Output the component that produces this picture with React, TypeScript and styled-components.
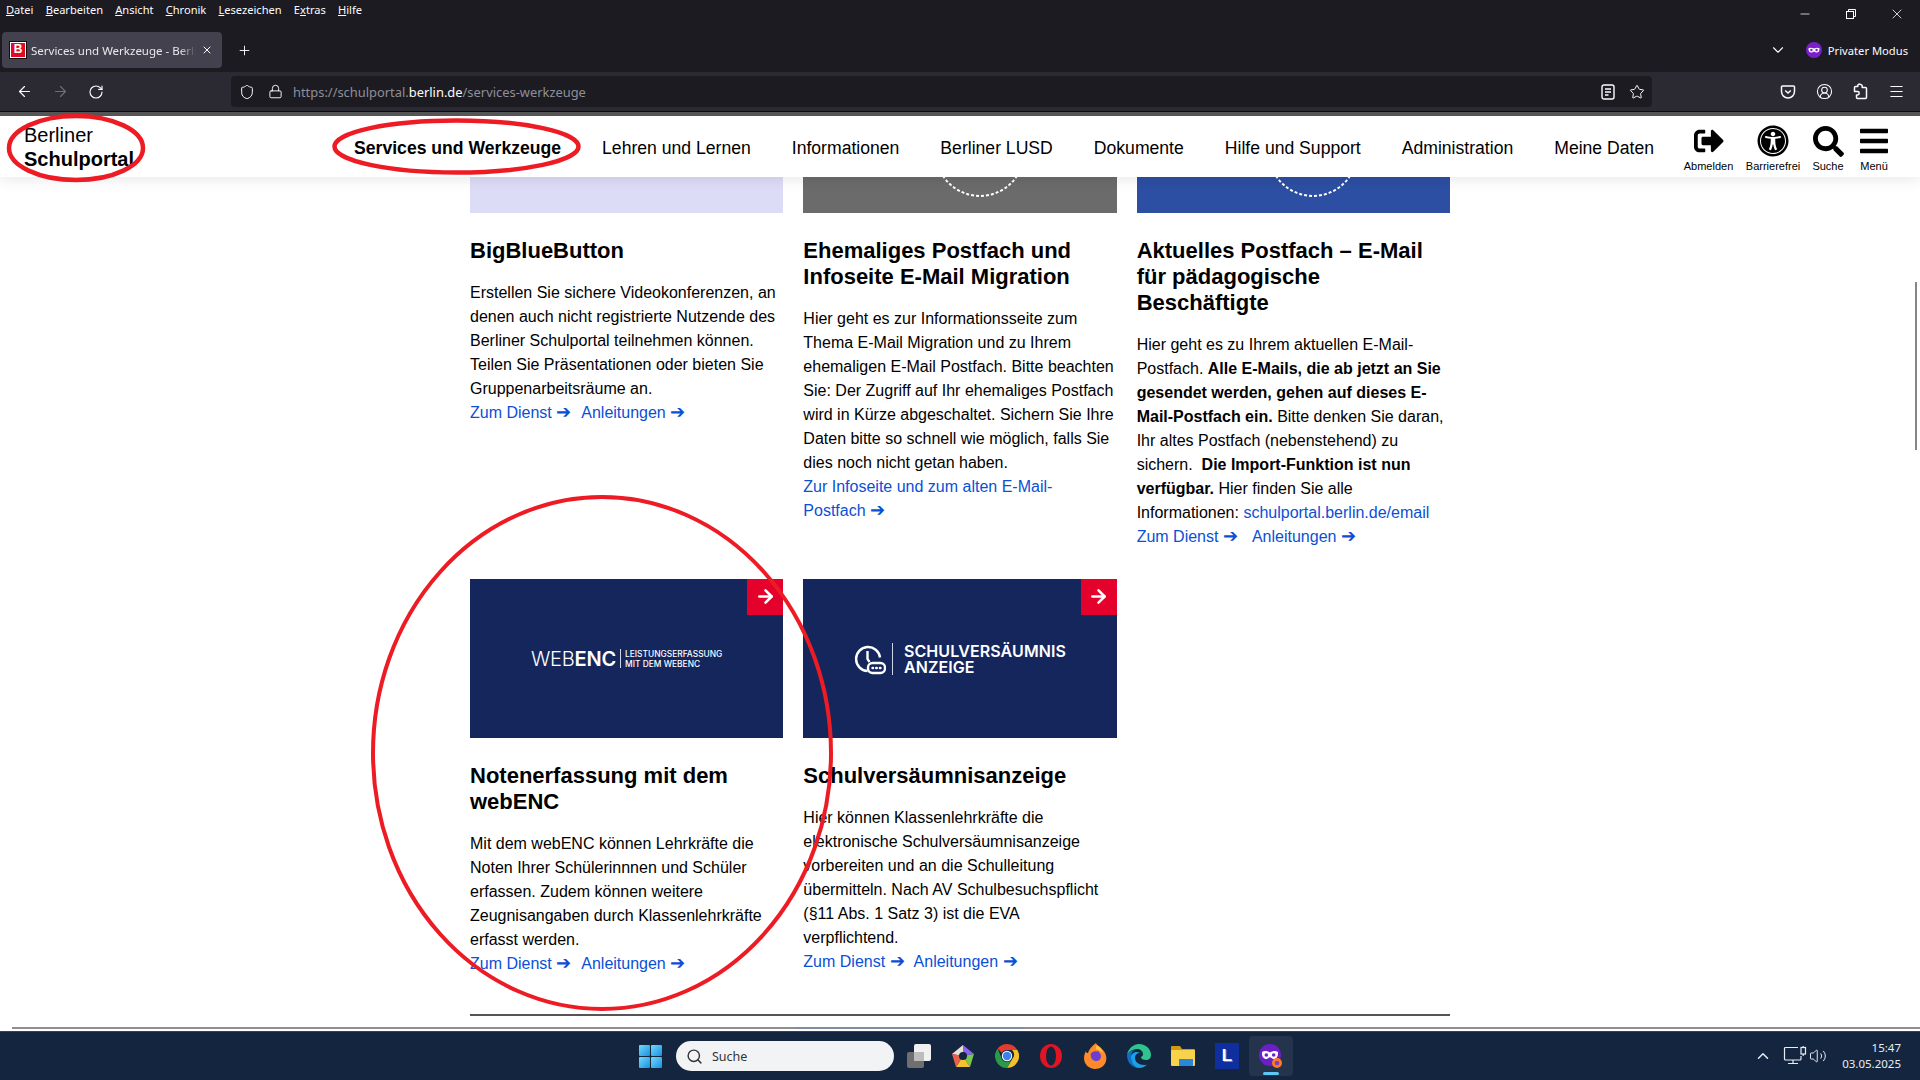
import React from 'react';
import styled, { createGlobalStyle } from 'styled-components';
import {
  ArrowLeft, ArrowRight, RotateCw, Shield, Lock, Star, Menu, ChevronDown, Plus, X, Minus, Search,
  ChevronUp, Volume2, CircleUserRound,
} from 'lucide-react';
import { FaSignOutAlt, FaUniversalAccess, FaSearch, FaBars } from 'react-icons/fa';

const Global = createGlobalStyle`
  html, body { margin: 0; padding: 0; height: 100%; overflow: hidden; background: #fff; }
  * { box-sizing: border-box; }
  #root { height: 1080px; }
`;

const UI = `"Noto Sans", "Open Sans", sans-serif`;
const WEB = `"Liberation Sans", Arial, sans-serif`;

const Frame = styled.div`
  position: relative;
  width: 1920px;
  height: 1080px;
  display: flex;
  flex-direction: column;
  overflow: hidden;
`;

const TopChrome = styled.div`
  background: #1c1b22;
  color: #fbfbfe;
  font-family: ${UI};
`;
const TitleRow = styled.div`
  height: 32px;
  display: flex;
  justify-content: space-between;
`;
const MenuBar = styled.div`
  display: flex;
  padding: 2px 0 0 6px;
  gap: 12.2px;
  font-size: 11.1px;
  line-height: 16px;
`;
const MenuEntry = styled.span``;
const Hotkey = styled.span`
  text-decoration: underline;
`;
const WindowButtons = styled.div`
  display: flex;
  height: 28px;
  align-items: center;
`;
const WindowButton = styled.div`
  width: 46px;
  display: flex;
  justify-content: center;
  color: #fff;
`;
const TabRow = styled.div`
  height: 40px;
  display: flex;
  padding: 0 0 4px 2px;
  align-items: stretch;
`;
const Tab = styled.div`
  width: 220px;
  background: #42414d;
  border-radius: 4px;
  display: flex;
  align-items: center;
  padding: 0 9px 0 8px;
  font-size: 11.5px;
  gap: 5px;
`;
const Favicon = styled.span`
  width: 16px;
  height: 16px;
  flex: none;
  background: #e30b24;
  border: 1.5px solid #fff;
  outline: 1px solid #111;
  color: #fff;
  font: bold 12px/13px ${WEB};
  text-align: center;
`;
const TabTitle = styled.span`
  flex: 1;
  white-space: nowrap;
  overflow: hidden;
  color: #e8e8ee;
  -webkit-mask-image: linear-gradient(90deg, #000 90%, transparent);
  mask-image: linear-gradient(90deg, #000 90%, transparent);
`;
const NewTab = styled.div`
  width: 44px;
  display: flex;
  align-items: center;
  justify-content: center;
`;
const Spacer = styled.div`
  flex: 1;
`;
const PrivateMode = styled.div`
  display: flex;
  align-items: center;
  font-size: 11.2px;
  gap: 6px;
  padding-right: 12px;
  margin-left: 19px;
  white-space: nowrap;
`;
const Chevron = styled.div`
  display: flex;
  align-items: center;
`;

const Toolbar = styled.div`
  height: 44px;
  background: #2b2a33;
  border-bottom: 4px solid #555;
  padding: 4px 6px 5px;
  display: flex;
  color: #fbfbfe;
  position: relative;
  &::after { content: ''; position: absolute; left: 0; right: 0; bottom: 0; height: 1px; background: #0c0c0f; }
`;
const ToolIcon = styled.div<{ $dim?: boolean }>`
  width: 36px;
  display: flex;
  align-items: center;
  justify-content: center;
  color: ${p => (p.$dim ? '#6f6e76' : '#fbfbfe')};
`;
const UrlBar = styled.div`
  margin-left: 117px;
  width: 1421px;
  height: 31px;
  background: #1c1b22;
  border-radius: 4px;
  display: flex;
  align-items: center;
  font-family: ${UI};
  font-size: 12.9px;
`;
const UrlIcon = styled.div<{ $w: number }>`
  width: ${p => p.$w}px;
  display: flex;
  align-items: center;
  justify-content: center;
  flex: none;
`;
const UrlText = styled.div`
  color: #8f8f96;
  margin-left: 6px;
  flex: 1;
  b { color: #fbfbfe; font-weight: 400; }
`;
const ToolRight = styled.div`
  display: flex;
  margin-left: auto;
`;

const Page = styled.main`
  flex: 1;
  min-height: 0;
  display: flex;
  flex-direction: column;
  background: #fff;
  font-family: ${WEB};
  color: #000;
  overflow: hidden;
`;
const Header = styled.header`
  height: 61px;
  flex: none;
  display: flex;
  align-items: center;
  padding: 0 32px 0 24px;
  background: #fff;
  box-shadow: 0 4px 12px rgba(0,0,0,.08);
  position: relative;
  z-index: 2;
`;
const Logo = styled.div`
  font-size: 20px;
  line-height: 24px;
  b { display: block; }
`;
const Nav = styled.nav`
  margin-left: auto;
  display: flex;
  gap: 41px;
  font-size: 17.6px;
  margin-top: 3px;
`;
const NavItem = styled.span<{ $active?: boolean }>`
  font-weight: ${p => (p.$active ? 700 : 400)};
  white-space: nowrap;
`;
const Tools = styled.div`
  display: flex;
  margin-left: 13px;
  padding-top: 4px;
`;
const ToolLink = styled.div<{ $w: number }>`
  width: ${p => p.$w}px;
  display: flex;
  flex-direction: column;
  align-items: center;
  font-size: 11px;
  line-height: 14px;
  white-space: nowrap;
  gap: 1px;
`;
const ToolGlyph = styled.div`
  height: 34px;
  display: flex;
  align-items: center;
  justify-content: center;
  color: #000;
`;
const Content = styled.div`
  flex: 1;
  min-height: 0;
  width: 980px;
  margin: 0 auto;
  display: flex;
  flex-direction: column;
`;
const CardGrid = styled.div`
  display: grid;
  grid-template-columns: repeat(3, 1fr);
  column-gap: 20px;
  row-gap: 30px;
  align-items: start;
`;
const Card = styled.article`
  display: flex;
  flex-direction: column;
  font-size: 16px;
  line-height: 24px;
`;
const Banner = styled.div<{ $bg: string; $h: number }>`
  height: ${p => p.$h}px;
  background: ${p => p.$bg};
  position: relative;
  overflow: hidden;
  display: flex;
  align-items: center;
  justify-content: center;
  color: #fff;
  font-family: Inter, sans-serif;
`;
const Corner = styled.div`
  position: absolute;
  top: 0;
  right: 0;
  width: 36px;
  height: 36px;
  background: #e4022c;
  display: flex;
  align-items: center;
  justify-content: center;
  color: #fff;
  padding-bottom: 2px;
`;
const Arc = styled.svg`
  position: absolute;
  left: 50%;
  top: 0;
  margin-left: -40px;
  width: 120px;
  height: 36px;
`;
const Heading = styled.h3`
  margin: 25px 0 17px;
  font-size: 22px;
  line-height: 26px;
  font-weight: 700;
`;
const Body = styled.p`
  margin: 0;
`;
const LinkRow = styled.div<{ $gap: number }>`
  display: flex;
  gap: ${p => p.$gap}px;
`;
const CardLink = styled.a`
  color: #0b4fd6;
  text-decoration: none;
`;
const LinkArrow = styled.span`
  font-size: 18px;
  line-height: 16px;
  white-space: nowrap;
`;
const WebEncMark = styled.div`
  display: flex;
  align-items: center;
  gap: 4px;
`;
const WebEncWord = styled.div`
  font-size: 20px;
  font-weight: 300;
  letter-spacing: -.2px;
  b { font-weight: 600; }
`;
const MarkRule = styled.div<{ $h: number }>`
  width: 1px;
  height: ${p => p.$h}px;
  background: #cfd4e4;
  flex: none;
`;
const WebEncSub = styled.div`
  font-size: 8.4px;
  line-height: 10px;
  font-weight: 500;
  white-space: nowrap;
`;
const SchulMark = styled.div`
  display: flex;
  align-items: center;
  gap: 6px;
`;
const SchulWords = styled.div`
  font-size: 16px;
  line-height: 16px;
  font-weight: 600;
  letter-spacing: .1px;
  white-space: nowrap;
  padding-left: 5px;
`;
const Rule = styled.hr`
  margin: auto 0 0;
  border: 0;
  height: 2px;
  background: #555;
  flex: none;
`;
const PageEnd = styled.div`
  height: 16px;
  flex: none;
  padding: 11px 0 0 12px;
  border-bottom: 1px solid #39434f;
`;
const PageEndLine = styled.div`
  height: 2px;
  background: linear-gradient(90deg, #8f8f8f 0 41%, #7f8ca3 41% 53%, #8f8f8f 53%);
`;
const Annotations = styled.svg`
  position: absolute;
  inset: 0;
  width: 1920px;
  height: 1080px;
  pointer-events: none;
  z-index: 5;
`;
const ScrollThumb = styled.div`
  position: absolute;
  left: 1915px;
  top: 282px;
  width: 2px;
  height: 168px;
  background: #85858a;
  z-index: 3;
`;

const Taskbar = styled.footer`
  height: 48px;
  flex: none;
  background: #14263f;
  display: flex;
  align-items: center;
  padding-left: 628px;
  color: #fff;
  font-family: ${UI};
`;
const TaskCell = styled.div<{ $active?: boolean }>`
  width: 44px;
  height: 40px;
  flex: none;
  display: flex;
  align-items: center;
  justify-content: center;
  position: relative;
  border-radius: 4px;
  background: ${p => (p.$active ? '#24344c' : 'transparent')};
  ${p => p.$active && `
    &::after {
      content: '';
      position: absolute;
      bottom: 1px;
      left: 14px;
      width: 16px;
      height: 3px;
      border-radius: 2px;
      background: #5cc8f5;
    }
  `}
`;
const TaskSearch = styled.div`
  width: 218px;
  height: 30px;
  margin: 0 3px 0 4px;
  background: #f2f3f5;
  border-radius: 15px;
  color: #333;
  display: flex;
  align-items: center;
  padding-left: 10px;
  gap: 9px;
  font-size: 12.5px;
  flex: none;
`;
const Tray = styled.div`
  margin-left: auto;
  display: flex;
  align-items: center;
  padding-right: 19px;
  color: #e8edf3;
`;
const TrayIcon = styled.div<{ $w: number }>`
  width: ${p => p.$w}px;
  display: flex;
  justify-content: center;
`;
const Clock = styled.div`
  font-size: 11.5px;
  line-height: 16px;
  text-align: right;
  margin-left: 12px;
  width: 60px;
`;

const PrivateGlyph = ({ size = 16 }: { size?: number }) => (
  <svg width={size} height={size} viewBox="0 0 16 16">
    <circle cx="8" cy="8" r="8" fill="#7a1fc9" />
    <path d="M2.500 6.200c1.600-.9 3.700-.6 5.500.4 1.800-1 3.900-1.300 5.500-.4.2 2.600-.9 4.400-2.900 4.400-1.200 0-1.900-1.100-2.600-1.100S6.600 10.600 5.400 10.600C3.400 10.600 2.300 8.800 2.500 6.200z" fill="#fff" />
    <circle cx="5.400" cy="8" r="1.200" fill="#7a1fc9" />
    <circle cx="10.600" cy="8" r="1.200" fill="#7a1fc9" />
  </svg>
);

const WinLogo = () => (
  <svg width="23" height="23" viewBox="0 0 23 23">
    <defs>
      <linearGradient id="win" x1="0" y1="0" x2="1" y2="1">
        <stop offset="0" stopColor="#6fdcfb" />
        <stop offset="1" stopColor="#1a8fe0" />
      </linearGradient>
    </defs>
    <rect width="11" height="11" rx="1" fill="url(#win)" />
    <rect x="12" width="11" height="11" rx="1" fill="url(#win)" />
    <rect y="12" width="11" height="11" rx="1" fill="url(#win)" />
    <rect x="12" y="12" width="11" height="11" rx="1" fill="url(#win)" />
  </svg>
);
const TaskView = () => (
  <svg width="24" height="24" viewBox="0 0 24 24">
    <rect x="0" y="8" width="17" height="16" rx="2" fill="#6f6f6f" />
    <rect x="7" y="0" width="17" height="17" rx="2" fill="#f1f1f1" />
    <rect x="7" y="8" width="10" height="9" fill="#bdbdbd" />
  </svg>
);
const Pentagon = () => (
  <svg width="24" height="24" viewBox="0 0 24 24">
    <polygon points="12,1 23,10 12,12" fill="#8a63f0" />
    <polygon points="12,1 1,10 12,12" fill="#e9dfd5" />
    <polygon points="23,10 19,23 12,12" fill="#7bc74d" />
    <polygon points="19,23 5,23 12,12" fill="#f2c230" />
    <polygon points="5,23 1,10 12,12" fill="#e8604c" />
    <circle cx="12" cy="12" r="4" fill="#14263f" />
  </svg>
);
const Chrome = () => (
  <svg width="24" height="24" viewBox="0 0 24 24">
    <path d="M12 0a12 12 0 0 1 10.400 6H12a6 6 0 0 0-5.200 3L2.700 4.500A12 12 0 0 1 12 0z" fill="#e33b2e" />
    <path d="M22.400 6A12 12 0 0 1 12 24l5.200-9a6 6 0 0 0-.2-9z" fill="#f6c02c" />
    <path d="M12 24A12 12 0 0 1 2.700 4.500L6.800 15a6 6 0 0 0 10.400 0z" fill="#2a9a47" />
    <circle cx="12" cy="12" r="5.200" fill="#fff" />
    <circle cx="12" cy="12" r="4.200" fill="#3b82ef" />
  </svg>
);
const Opera = () => (
  <svg width="24" height="24" viewBox="0 0 24 24">
    <ellipse cx="12" cy="12" rx="11" ry="12" fill="#e01422" />
    <ellipse cx="12" cy="12" rx="5" ry="9.500" fill="#14263f" />
  </svg>
);
const Firefox = () => (
  <svg width="24" height="26" viewBox="0 0 24 26">
    <path d="M13 0c1 3 4 3 6 6 4 4 5 8 4 12-1 5-6 8-11 8S1 22 1 15c0-3 1-5 2-7 0 2 1 2 2 2 1-4 4-7 8-10z" fill="#ff8a2a" />
    <path d="M12 8c-1 1-3 1-4 2-1 4 1 8 5 8 3 0 5-2 5-5 0-2-2-4-3-5-1 0-2 1-3 0z" fill="#6b3fd0" />
    <path d="M14 2c2 2 5 4 6 8-2-2-4-3-7-4 0-1 0-3 1-4z" fill="#ffc93c" />
  </svg>
);
const Edge = () => (
  <svg width="24" height="24" viewBox="0 0 24 24">
    <path d="M12 0c7 0 12 5 12 11 0 3-2 5-5 5-3 0-5-1-5-3 1-1 2-1 2-3 0-3-3-5-6-5S2 7 0 11C1 5 6 0 12 0z" fill="#2fc38f" />
    <path d="M0 11c2-4 6-5 8-5-3 1-4 4-4 7 0 5 4 10 10 11C6 25 0 19 0 11z" fill="#0f6fc6" />
    <path d="M4 13c0-3 3-5 6-5 1 0 2 .5 3 1-3 0-5 2-5 5 0 4 4 7 9 7 1 0 2 0 3-.5-2 2-5 3.500-7 3.500C8 24 4 19 4 13z" fill="#1aa0e6" />
  </svg>
);
const Folder = () => (
  <svg width="24" height="24" viewBox="0 0 24 24">
    <path d="M0 3a1 1 0 0 1 1-1h8l2 3h12a1 1 0 0 1 1 1v2H0z" fill="#d19a12" />
    <rect y="6" width="24" height="16" rx="1" fill="#f9d24b" />
    <rect x="8" y="15" width="14" height="7" fill="#2b88d8" />
  </svg>
);
const LTile = styled.div`
  width: 24px;
  height: 26px;
  background: #0f2f9e;
  font: 700 17px/26px ${WEB};
  text-align: center;
  color: #fff;
  text-shadow: 1px 1px 0 #6a7fd8;
`;
const PrivateApp = () => (
  <svg width="24" height="26" viewBox="0 0 24 26">
    <circle cx="11" cy="12" r="11" fill="#6a1fc7" />
    <path d="M3 9c2.500-1.500 5.500-1 8 .5 2.500-1.500 5.500-2 8-.5.3 4-1.300 7-4.300 7-1.700 0-2.700-1.700-3.700-1.700S9 16 7.300 16C4.300 16 2.700 13 3 9z" fill="#fff" />
    <circle cx="7.300" cy="12" r="1.800" fill="#6a1fc7" />
    <circle cx="14.700" cy="12" r="1.800" fill="#6a1fc7" />
    <circle cx="18" cy="20" r="5" fill="#ff7a1a" />
    <circle cx="18" cy="20" r="2.300" fill="#7a3fd0" />
  </svg>
);
const NetworkIcon = () => (
  <svg width="24" height="22" viewBox="0 0 24 22" fill="none" stroke="currentColor" strokeWidth="1.200">
    <path d="M15 2.500H2.500a1 1 0 0 0-1 1V14a1 1 0 0 0 1 1h14.500a1 1 0 0 0 1-1v-3" />
    <path d="M10 15v3M5 18.500h10" />
    <rect x="18" y="2.500" width="4.500" height="6.500" />
    <path d="M20.200 1v1.500M20.200 9v2" />
  </svg>
);
const ClockMark = () => (
  <svg width="32" height="32" viewBox="0 0 32 32" fill="none" stroke="#fff" strokeWidth="2.400">
    <path d="M13.500 28A12 12 0 1 1 26 14.500" />
    <path d="M13.500 8v8l2 3" />
    <rect x="14" y="20" width="17" height="10" rx="4.500" />
    <path d="M18.500 25h.6M22.200 25h.6M25.900 25h.6" strokeLinecap="round" />
  </svg>
);
const ReaderIcon = () => (
  <svg width="14" height="16" viewBox="0 0 14 16" fill="none" stroke="currentColor" strokeWidth="1.400">
    <rect x="1" y="1" width="12" height="14" rx="2" />
    <path d="M4 5h6M4 8h6M4 11h3.500" />
  </svg>
);
const PocketIcon = () => (
  <svg width="16" height="16" viewBox="0 0 16 16" fill="none" stroke="currentColor" strokeWidth="1.500">
    <path d="M2.500 2h11a1 1 0 0 1 1 1v4.500a6.500 6.500 0 0 1-13 0V3a1 1 0 0 1 1-1z" />
    <path d="M5.200 6.500 8 9l2.800-2.500" />
  </svg>
);
const ExtensionIcon = () => (
  <svg width="16" height="17" viewBox="0 0 16 17" fill="none" stroke="currentColor" strokeWidth="1.500" strokeLinejoin="round">
    <path d="M8.500 1.500a1.700 1.700 0 0 1 1.700 1.700v1.300h3.300a1 1 0 0 1 1 1v9a1 1 0 0 1-1 1h-8a1 1 0 0 1-1-1v-2.500h1a1.700 1.700 0 0 0 0-3.400h-3v-4.100a1 1 0 0 1 1-1h2.300V3.200A1.700 1.700 0 0 1 8.500 1.500z" />
  </svg>
);

type CardData = {
  key: string;
  bg: string;
  h: number;
  arc?: boolean;
  arrow?: boolean;
  art?: React.ReactNode;
  title: React.ReactNode;
  body: React.ReactNode;
  links: string[];
  linkGap: number;
};

const dienstLinks = ['Zum Dienst', 'Anleitungen'];

const cards: CardData[] = [
  {
    key: 'bbb', bg: '#dcdcf7', h: 36, title: 'BigBlueButton',
    body: 'Erstellen Sie sichere Videokonferenzen, an denen auch nicht registrierte Nutzende des Berliner Schulportal teilnehmen können. Teilen Sie Präsentationen oder bieten Sie Gruppenarbeitsräume an.',
    links: dienstLinks, linkGap: 10,
  },
  {
    key: 'old', bg: '#6b6b6b', h: 36, arc: true, title: 'Ehemaliges Postfach und Infoseite E-Mail Migration',
    body: 'Hier geht es zur Informationsseite zum Thema E-Mail Migration und zu Ihrem ehemaligen E-Mail Postfach. Bitte beachten Sie: Der Zugriff auf Ihr ehemaliges Postfach wird in Kürze abgeschaltet. Sichern Sie Ihre Daten bitte so schnell wie möglich, falls Sie dies noch nicht getan haben.',
    links: ['Zur Infoseite und zum alten E-Mail-Postfach'], linkGap: 10,
  },
  {
    key: 'new', bg: '#2d4fa3', h: 36, arc: true, title: 'Aktuelles Postfach – E-Mail für pädagogische Beschäftigte',
    body: (
      <>
        Hier geht es zu Ihrem aktuellen E-Mail-Postfach. <b>Alle E-Mails, die ab jetzt an Sie gesendet werden, gehen auf dieses E-Mail-Postfach ein.</b> Bitte denken Sie daran, Ihr altes Postfach (nebenstehend) zu sichern.&nbsp; <b>Die Import-Funktion ist nun verfügbar.</b> Hier finden Sie alle Informationen: <CardLink>schulportal.berlin.de/email</CardLink>
      </>
    ),
    links: dienstLinks, linkGap: 14,
  },
  {
    key: 'enc', bg: '#14265c', h: 159, arrow: true,
    art: (
      <WebEncMark>
        <WebEncWord>WEB<b>ENC</b></WebEncWord>
        <MarkRule $h={19} />
        <WebEncSub>LEISTUNGSERFASSUNG<br />MIT DEM WEBENC</WebEncSub>
      </WebEncMark>
    ),
    title: 'Notenerfassung mit dem webENC',
    body: 'Mit dem webENC können Lehrkräfte die Noten Ihrer Schülerinnnen und Schüler erfassen. Zudem können weitere Zeugnisangaben durch Klassenlehrkräfte erfasst werden.',
    links: dienstLinks, linkGap: 10,
  },
  {
    key: 'schul', bg: '#14265c', h: 159, arrow: true,
    art: (
      <SchulMark>
        <ClockMark />
        <MarkRule $h={32} />
        <SchulWords>SCHULVERSÄUMNIS<br />ANZEIGE</SchulWords>
      </SchulMark>
    ),
    title: 'Schulversäumnisanzeige',
    body: 'Hier können Klassenlehrkräfte die elektronische Schulversäumnisanzeige vorbereiten und an die Schulleitung übermitteln. Nach AV Schulbesuchspflicht (§11 Abs. 1 Satz 3) ist die EVA verpflichtend.',
    links: dienstLinks, linkGap: 9,
  },
];

const navItems = ['Lehren und Lernen', 'Informationen', 'Berliner LUSD', 'Dokumente', 'Hilfe und Support', 'Administration', 'Meine Daten'];
const menuItems: [string, string, string][] = [
  ['', 'D', 'atei'], ['', 'B', 'earbeiten'], ['', 'A', 'nsicht'], ['', 'C', 'hronik'],
  ['', 'L', 'esezeichen'], ['E', 'x', 'tras'], ['', 'H', 'ilfe'],
];

export default function App() {
  return (
    <Frame>
      <Global />
      <TopChrome>
        <TitleRow>
          <MenuBar>
            {menuItems.map(([a, k, b]) => <MenuEntry key={k}>{a}<Hotkey>{k}</Hotkey>{b}</MenuEntry>)}
          </MenuBar>
          <WindowButtons>
            <WindowButton><Minus size={14} strokeWidth={1.300} /></WindowButton>
            <WindowButton>
              <svg width="12" height="12" viewBox="0 0 12 12" fill="none" stroke="currentColor">
                <rect x="1.500" y="3.500" width="7" height="7" />
                <path d="M3.500 3V1.500h7v7H9" />
              </svg>
            </WindowButton>
            <WindowButton><X size={16} strokeWidth={1.200} /></WindowButton>
          </WindowButtons>
        </TitleRow>
        <TabRow>
          <Tab>
            <Favicon>B</Favicon>
            <TabTitle>Services und Werkzeuge - Berliner Schulportal</TabTitle>
            <X size={12} />
          </Tab>
          <NewTab><Plus size={15} strokeWidth={1.500} /></NewTab>
          <Spacer />
          <Chevron><ChevronDown size={18} strokeWidth={1.500} /></Chevron>
          <PrivateMode><PrivateGlyph />Privater Modus</PrivateMode>
        </TabRow>
      </TopChrome>
      <Toolbar>
        <ToolIcon><ArrowLeft size={17} strokeWidth={1.700} /></ToolIcon>
        <ToolIcon $dim><ArrowRight size={17} strokeWidth={1.700} /></ToolIcon>
        <ToolIcon><RotateCw size={16} strokeWidth={1.700} /></ToolIcon>
        <UrlBar>
          <UrlIcon $w={32}><Shield size={16} strokeWidth={1.500} /></UrlIcon>
          <UrlIcon $w={24}><Lock size={15} strokeWidth={1.500} /></UrlIcon>
          <UrlText>https://schulportal.<b>berlin.de</b>/services-werkzeuge</UrlText>
          <UrlIcon $w={28}><ReaderIcon /></UrlIcon>
          <UrlIcon $w={30}><Star size={16} strokeWidth={1.500} /></UrlIcon>
        </UrlBar>
        <ToolRight>
          <ToolIcon><PocketIcon /></ToolIcon>
          <ToolIcon><CircleUserRound size={17} strokeWidth={1.500} /></ToolIcon>
          <ToolIcon><ExtensionIcon /></ToolIcon>
          <ToolIcon><Menu size={17} strokeWidth={1.500} /></ToolIcon>
        </ToolRight>
      </Toolbar>
      <Page>
        <Header>
          <Logo>Berliner<b>Schulportal</b></Logo>
          <Nav>
            <NavItem $active>Services und Werkzeuge</NavItem>
            {navItems.map(n => <NavItem key={n}>{n}</NavItem>)}
          </Nav>
          <Tools>
            <ToolLink $w={83}><ToolGlyph><FaSignOutAlt size={30} /></ToolGlyph>Abmelden</ToolLink>
            <ToolLink $w={46}><ToolGlyph><FaUniversalAccess size={32} /></ToolGlyph>Barrierefrei</ToolLink>
            <ToolLink $w={64}><ToolGlyph><FaSearch size={31} /></ToolGlyph>Suche</ToolLink>
            <ToolLink $w={28}><ToolGlyph><FaBars size={32} /></ToolGlyph>Menü</ToolLink>
          </Tools>
        </Header>
        <Content>
          <CardGrid>
            {cards.map(c => (
              <Card key={c.key}>
                <Banner $bg={c.bg} $h={c.h}>
                  {c.arc && (
                    <Arc viewBox="0 0 120 36" fill="none">
                      <circle cx="60" cy="-25" r="44" stroke="#fff" strokeWidth="2" strokeDasharray="3 2" />
                    </Arc>
                  )}
                  {c.art}
                  {c.arrow && <Corner><ArrowRight size={21} strokeWidth={3} /></Corner>}
                </Banner>
                <Heading>{c.title}</Heading>
                <Body>{c.body}</Body>
                <LinkRow $gap={c.linkGap}>
                  {c.links.map((l, i) => (
                    <CardLink key={i}>{l}&nbsp;<LinkArrow>➔</LinkArrow></CardLink>
                  ))}
                </LinkRow>
              </Card>
            ))}
          </CardGrid>
          <Rule />
        </Content>
        <PageEnd><PageEndLine /></PageEnd>
      </Page>
      <Taskbar>
        <TaskCell><WinLogo /></TaskCell>
        <TaskSearch><Search size={17} strokeWidth={2} />Suche</TaskSearch>
        <TaskCell><TaskView /></TaskCell>
        <TaskCell><Pentagon /></TaskCell>
        <TaskCell><Chrome /></TaskCell>
        <TaskCell><Opera /></TaskCell>
        <TaskCell><Firefox /></TaskCell>
        <TaskCell><Edge /></TaskCell>
        <TaskCell><Folder /></TaskCell>
        <TaskCell><LTile>L</LTile></TaskCell>
        <TaskCell $active><PrivateApp /></TaskCell>
        <Tray>
          <TrayIcon $w={40}><ChevronUp size={18} strokeWidth={2} /></TrayIcon>
          <TrayIcon $w={24}><NetworkIcon /></TrayIcon>
          <TrayIcon $w={22}><Volume2 size={18} strokeWidth={1.300} /></TrayIcon>
          <Clock>15:47<br />03.05.2025</Clock>
        </Tray>
      </Taskbar>
      <ScrollThumb />
      <Annotations viewBox="0 0 1920 1080" fill="none" stroke="#ed1c24" strokeWidth="4.500">
        <ellipse cx="76" cy="148" rx="67" ry="32" />
        <ellipse cx="456.500" cy="146.500" rx="122" ry="26" />
        <ellipse cx="602" cy="753" rx="229" ry="256" strokeWidth="4" />
      </Annotations>
    </Frame>
  );
}
